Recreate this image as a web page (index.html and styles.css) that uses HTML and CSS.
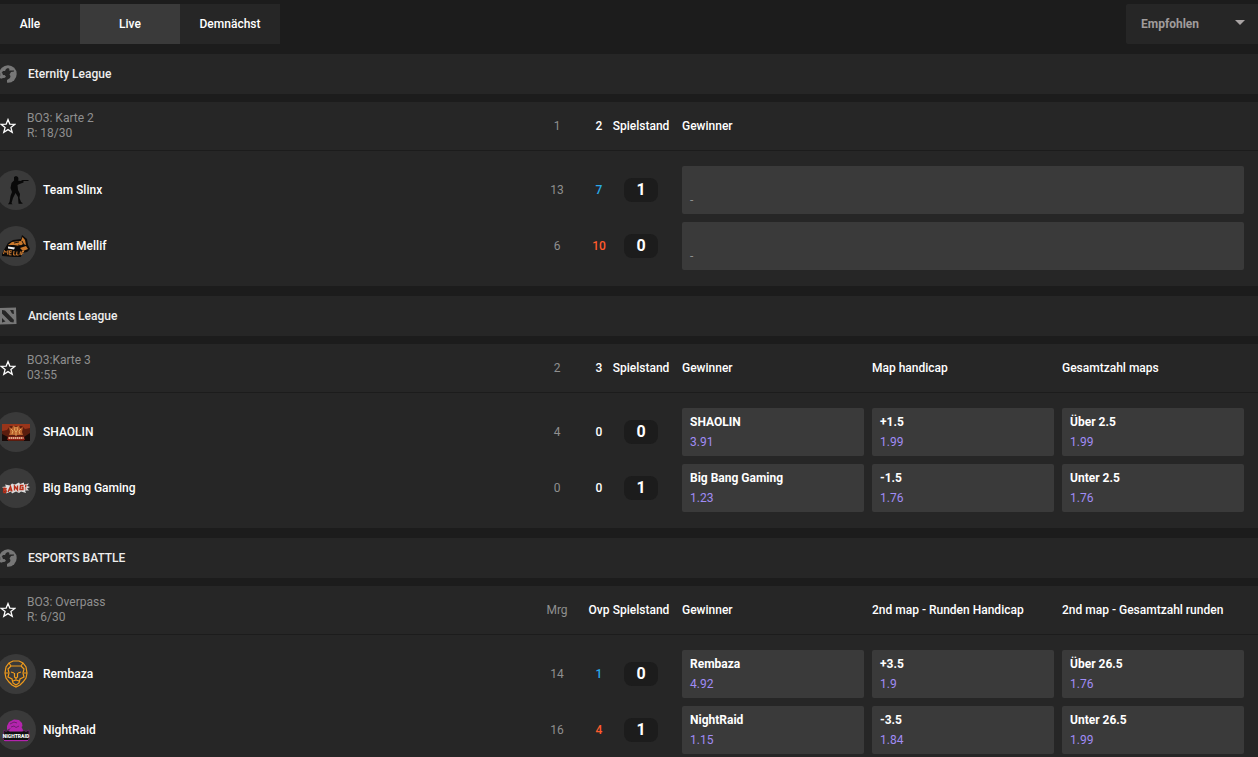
FILE: index.html
```html
<!DOCTYPE html>
<html lang="de">
  <head>
    <meta charset="utf-8">
    <title>Live</title>
    <link rel="stylesheet" href="styles.css">
  </head>
  <body>
    <svg class="sprite" aria-hidden="true">
      <symbol id="star" viewBox="0 0 16 16">
        <path d="M8 1.600l1.800 4.500 4.900.3-3.800 3.100 1.300 4.700L8 11.600l-4.200 2.600 1.300-4.700L1.300 6.400l4.900-.3z" fill="none" stroke="#fff" stroke-width="1.300"/>
      </symbol>
      <symbol id="cs" viewBox="0 0 18 18">
        <circle cx="9" cy="9" r="8.700" fill="#777"/>
        <path d="M7 4l2-1 1.500 1-.5 1.500h5v1l-3 .500-1.500 2.500 1 1.500-.500 2L8 15v3H3l-2-3 .500-1.500L4 13l3-1-1.500-2L2 11 0 9l2.500-1L4 6h2z" fill="#262626"/>
        <path d="M1 8.500l2-1 1 2.500 2.500 1L6 12.500l-4 1z" fill="#777"/>
      </symbol>
      <symbol id="dota" viewBox="0 0 18 18">
        <path d="M1 1l16-.500.500 16.500L.500 17.500z" fill="#777"/>
        <path d="M3 3l3 .500 9 9.500-.500 2.500-3-.500L3 6.500zM11 3h3.500l.500 4-2-.500zM3 11l3.500 3.500L3 15.500z" fill="#262626"/>
      </symbol>
    </svg>

    <header class="toolbar">
      <nav class="tabs">
        <button class="tab" type="button">Alle</button>
        <button class="tab active" type="button">Live</button>
        <button class="tab" type="button">Demnächst</button>
      </nav>
      <div class="sort">
        <select class="sort-select" aria-label="Sortierung">
          <option>Empfohlen</option>
        </select>
      </div>
    </header>

    <main>
      <section class="league">
        <h2 class="league-title"><svg class="game-icon"><use href="#cs"/></svg>Eternity League</h2>
        <article class="match">
          <div class="row match-head">
            <div class="info">
              <button class="fav" type="button" aria-label="Favorit"><svg><use href="#star"/></svg></button>
              <p class="status">BO3: Karte 2<br>R: 18/30</p>
            </div>
            <span class="map muted">1</span>
            <span class="map">2</span>
            <span class="map">Spielstand</span>
            <div class="markets single"><span>Gewinner</span></div>
          </div>
          <div class="teams">
            <div class="row">
              <div class="info">
                <svg class="avatar" viewBox="0 0 40 40">
                  <circle cx="20" cy="20" r="20" fill="#3a3a3a"/>
                  <path d="M18 7l2-1 2 1 .500 2-.500 1.500 2.500.500 2-1h6v1h-5v1.500l-4 1.500-2 1 .500 5 2 4-.500 4 1.500 4 1.500 1v.800h-4L22 27l-2.500-4-2.500 5-1.500 5 1 1.300h-4.500l1.500-2.300 1-6 1.500-4-1.500-4 1-5 2.500-2.500z" fill="#090909"/>
                </svg>
                <span>Team Slinx</span>
              </div>
              <span class="map muted">13</span>
              <span class="map win">7</span>
              <span class="score">1</span>
              <div class="markets single"><button class="odd" type="button" disabled><span class="empty">-</span></button></div>
            </div>
            <div class="row">
              <div class="info">
                <svg class="avatar" viewBox="0 0 40 40">
                  <circle cx="20" cy="20" r="20" fill="#3a3a3a"/>
                  <path d="M6 28l3-6 3-5 5-3 8-1 1-4 5 4 1 6 2 4-3 3-5 1-1 4-7 0-12-1z" fill="#0c0a09"/>
                  <path d="M12 19l4-3 9-1 1.500-4 2.500 3 1 5-3-1-3 2-6-1zM24 22l6-2 2 3-5 2z" fill="#c9782c"/>
                  <path d="M18 17l5-1M26 15l2 4M22 19l4 1" stroke="#16100b" fill="none"/>
                  <path d="M12 20.500l7 1-1 2-6-1z" fill="#eee"/>
                  <path d="M7.500 28l1-3.500 1.500 2 2-2-.500 4M16 25l-2.500-.300-.500 4 2.500.2M13.500 26.700h2M18 25l-.500 4h2M21 25.500l-.500 3.500h2M24.500 25.500l-.500 3.500M28 25.500h-2l-.500 3.500M26 27h1.500" fill="none" stroke="#d07c30"/>
                </svg>
                <span>Team Mellif</span>
              </div>
              <span class="map muted">6</span>
              <span class="map lose">10</span>
              <span class="score">0</span>
              <div class="markets single"><button class="odd" type="button" disabled><span class="empty">-</span></button></div>
            </div>
          </div>
        </article>
      </section>

      <section class="league">
        <h2 class="league-title"><svg class="game-icon"><use href="#dota"/></svg>Ancients League</h2>
        <article class="match">
          <div class="row match-head">
            <div class="info">
              <button class="fav" type="button" aria-label="Favorit"><svg><use href="#star"/></svg></button>
              <p class="status">BO3:Karte 3<br>03:55</p>
            </div>
            <span class="map muted">2</span>
            <span class="map">3</span>
            <span class="map">Spielstand</span>
            <div class="markets"><span>Gewinner</span><span>Map handicap</span><span>Gesamtzahl maps</span></div>
          </div>
          <div class="teams">
            <div class="row">
              <div class="info">
                <svg class="avatar" viewBox="0 0 40 40">
                  <circle cx="20" cy="20" r="20" fill="#3a3a3a"/>
                  <path d="M6 12h28v17H6z" fill="#5a1c0e"/>
                  <path d="M6 12h28v4l-5 1-3-3H14l-3 4-5 1z" fill="#99351a"/>
                  <path d="M6 22l6 3v4H6zM28 25l6-4v8h-6z" fill="#180a08"/>
                  <path d="M13 15l3 1.500 1-3 3 1.500 3-1.500 1 3 3-1.500-1 5 1 3H13l1-3z" fill="#b9602c"/>
                  <path d="M15 17l2 2-1 3M25 17l-2 2 1 3M19 15l-.500 3 1.500 2 1.500-2-.500-3M20 20v4" fill="none" stroke="#eeb56a" stroke-width=".8"/>
                  <path d="M12 24.500h16l1 3.500H11z" fill="#8e1c12"/>
                  <path d="M12.500 26h15" stroke="#f4d7b0" stroke-width="1.400" stroke-dasharray="1.500 .5"/>
                </svg>
                <span>SHAOLIN</span>
              </div>
              <span class="map muted">4</span>
              <span class="map">0</span>
              <span class="score">0</span>
              <div class="markets">
                <button class="odd" type="button"><b>SHAOLIN</b><span>3.91</span></button>
                <button class="odd" type="button"><b>+1.5</b><span>1.99</span></button>
                <button class="odd" type="button"><b>Über 2.5</b><span>1.99</span></button>
              </div>
            </div>
            <div class="row">
              <div class="info">
                <svg class="avatar" viewBox="0 0 40 40">
                  <circle cx="20" cy="20" r="20" fill="#3a3a3a"/>
                  <path d="M6 19l4-.500-1-2 5 1 2-2 3 1 4-2 1 1.500 4-1.500v2l5-1-2 2.500 3 1-3 1.500 2 2-4 0 1 2.500-5-1.500-2 1.500-3-1.500-4 2-1-2-5 2 1-3-4 .500 1.500-2z" fill="#dedede"/>
                  <path d="M7.500 24.500l.500-4.500 2 .500-.500 1.500H8M10 22l-.500 2.500h-2M12 24l2.500-5.500 1.500 5M13 22h2.500M18.500 22.500v-4.500l3 4v-4.500M27.500 17.500l-3 0-.500 4h3v-2h-1.500M30 16.500l-.500 3M29.500 20.500v1" fill="none" stroke="#b92d17" stroke-width="1.400"/>
                </svg>
                <span>Big Bang Gaming</span>
              </div>
              <span class="map muted">0</span>
              <span class="map">0</span>
              <span class="score">1</span>
              <div class="markets">
                <button class="odd" type="button"><b>Big Bang Gaming</b><span>1.23</span></button>
                <button class="odd" type="button"><b>-1.5</b><span>1.76</span></button>
                <button class="odd" type="button"><b>Unter 2.5</b><span>1.76</span></button>
              </div>
            </div>
          </div>
        </article>
      </section>

      <section class="league">
        <h2 class="league-title"><svg class="game-icon"><use href="#cs"/></svg>ESPORTS BATTLE</h2>
        <article class="match">
          <div class="row match-head">
            <div class="info">
              <button class="fav" type="button" aria-label="Favorit"><svg><use href="#star"/></svg></button>
              <p class="status">BO3: Overpass<br>R: 6/30</p>
            </div>
            <span class="map muted">Mrg</span>
            <span class="map">Ovp</span>
            <span class="map">Spielstand</span>
            <div class="markets"><span>Gewinner</span><span>2nd map - Runden Handicap</span><span>2nd map - Gesamtzahl runden</span></div>
          </div>
          <div class="teams">
            <div class="row">
              <div class="info">
                <svg class="avatar" viewBox="0 0 40 40">
                  <circle cx="20" cy="20" r="20" fill="#3a3a3a"/>
                  <g fill="none" stroke="#f09b1c" stroke-width="1.200">
                    <path d="M13 9l4-2h6l4 2 3 4 1 6-1 5-3 4-3 3-4 2-4-2-3-3-3-4-1-5 1-6z"/>
                    <path d="M13 9l2 3h10l2-3M15 12l-3 3 1 4-1 4 4 2 1 4 3 2 3-2 1-4 4-2-1-4 1-4-3-3M9 19h3M28 19h3"/>
                    <path d="M15 18l3 1M25 18l-3 1M18.500 19v4L20 24.500l1.500-1.500v-4M17 27l3-1 3 1"/>
                  </g>
                </svg>
                <span>Rembaza</span>
              </div>
              <span class="map muted">14</span>
              <span class="map win">1</span>
              <span class="score">0</span>
              <div class="markets">
                <button class="odd" type="button"><b>Rembaza</b><span>4.92</span></button>
                <button class="odd" type="button"><b>+3.5</b><span>1.9</span></button>
                <button class="odd" type="button"><b>Über 26.5</b><span>1.76</span></button>
              </div>
            </div>
            <div class="row">
              <div class="info">
                <svg class="avatar" viewBox="0 0 40 40">
                  <circle cx="20" cy="20" r="20" fill="#3a3a3a"/>
                  <path d="M11 16l2-4 5-2.500 5 .500 3 3 .500 3-1 1 2 4H12l3-3-4 2z" fill="#b324ad"/>
                  <path d="M14 14l4-2 3 1M15 17l3-1 2 1.500 3-1.500" fill="none" stroke="#5d1a60" stroke-width=".8"/>
                  <path d="M8 20l2 1.500 2-1 2 1h12l2-1 2 1 3-1.500v9l-2 2H9l-2-2z" fill="#111" stroke="#82227f" stroke-width=".7"/>
                  <text class="logo-text" x="20" y="28" text-anchor="middle">NIGHTRAID</text>
                  <path d="M8 30.500h24" stroke="#b324ad"/>
                </svg>
                <span>NightRaid</span>
              </div>
              <span class="map muted">16</span>
              <span class="map lose">4</span>
              <span class="score">1</span>
              <div class="markets">
                <button class="odd" type="button"><b>NightRaid</b><span>1.15</span></button>
                <button class="odd" type="button"><b>-3.5</b><span>1.84</span></button>
                <button class="odd" type="button"><b>Unter 26.5</b><span>1.99</span></button>
              </div>
            </div>
          </div>
        </article>
      </section>
    </main>
  </body>
</html>
```

FILE: styles.css
```css
* {
  box-sizing: border-box;
}

body {
  margin: 0;
  height: 100vh;
  overflow: hidden;
  background: #1c1c1c;
  color: #fff;
  font-family: Roboto, sans-serif;
  font-size: 12px;
  line-height: 15px;
}

button,
select {
  font: inherit;
  color: inherit;
  border: none;
  cursor: pointer;
}

.sprite {
  display: none;
}

.toolbar {
  display: flex;
  justify-content: space-between;
  padding-top: 4px;
  margin-bottom: 10px;
}

.tabs {
  display: flex;
  margin-left: -20px;
}

.tab {
  width: 100px;
  height: 40px;
  padding: 0;
  background: #262626;
  font-weight: 500;
}

.tab.active {
  background: #3a3a3a;
}

.sort {
  position: relative;
}

.sort-select {
  appearance: none;
  width: 132px;
  height: 40px;
  padding: 0 32px 0 15px;
  border-radius: 2px 0 0 2px;
  background: #262626;
  color: #a09c9c;
  font-weight: 700;
}

/* dropdown arrow */
.sort::after {
  content: "";
  position: absolute;
  top: 16px;
  right: 13px;
  border: 5px solid transparent;
  border-top-color: #a9a4a4;
  border-bottom: none;
  pointer-events: none;
}

.league {
  margin-bottom: 10px;
}

.league-title {
  display: flex;
  align-items: center;
  height: 40px;
  margin: 0 0 8px;
  background: #262626;
  color: #eee;
  font-size: 12px;
  font-weight: 500;
}

.game-icon {
  width: 18px;
  height: 18px;
  margin: 0 11px 0 -1px;
}

.match {
  background: #262626;
}

/* team | map | map | score | gap | markets */
.row {
  display: grid;
  grid-template-columns: minmax(0, 67fr) 42px 42px 42px 20px minmax(0, 72fr);
  align-items: center;
}

.match-head {
  height: 49px;
  border-bottom: 1px solid #1c1c1c;
  font-weight: 500;
}

.teams {
  display: grid;
  gap: 8px;
  padding: 15px 0 16px;
}

.info {
  display: flex;
  align-items: center;
  font-weight: 500;
}

.fav {
  width: 16px;
  height: 16px;
  padding: 0;
  margin-right: 11px;
  background: none;
}

.fav svg {
  display: block;
  width: 16px;
  height: 16px;
}

.status {
  margin: 0;
  color: #8f8f8f;
  font-weight: 400;
}

.avatar {
  width: 40px;
  height: 40px;
  margin: 0 7px 0 -4px;
}

.logo-text {
  font-family: Roboto, sans-serif;
  font-size: 5px;
  font-weight: 900;
  fill: #fff;
}

.map {
  display: flex;
  justify-content: center;
  font-weight: 500;
  white-space: nowrap;
}

.muted {
  color: #8f8f8f;
  font-weight: 400;
}

.win {
  color: #29a9e8;
}

.lose {
  color: #ff5a2c;
}

.score {
  justify-self: center;
  width: 34px;
  border-radius: 8px;
  background: #1c1c1c;
  font-size: 16px;
  font-weight: 700;
  line-height: 24px;
  text-align: center;
}

.markets {
  grid-column: 6;
  display: grid;
  grid-template-columns: repeat(3, minmax(0, 1fr));
  gap: 8px;
  padding-right: 14px;
}

.markets.single {
  grid-template-columns: minmax(0, 1fr);
}

.odd {
  display: flex;
  flex-direction: column;
  justify-content: center;
  gap: 5px;
  height: 48px;
  padding: 0 8px;
  border-radius: 2px;
  background: #3a3a3a;
  text-align: left;
}

.odd:hover {
  background: #444;
}

.odd b {
  font-weight: 700;
}

.odd span {
  color: #a18cf5;
}

.odd .empty {
  margin-top: 20px;
  color: #8f8f8f;
}
```
